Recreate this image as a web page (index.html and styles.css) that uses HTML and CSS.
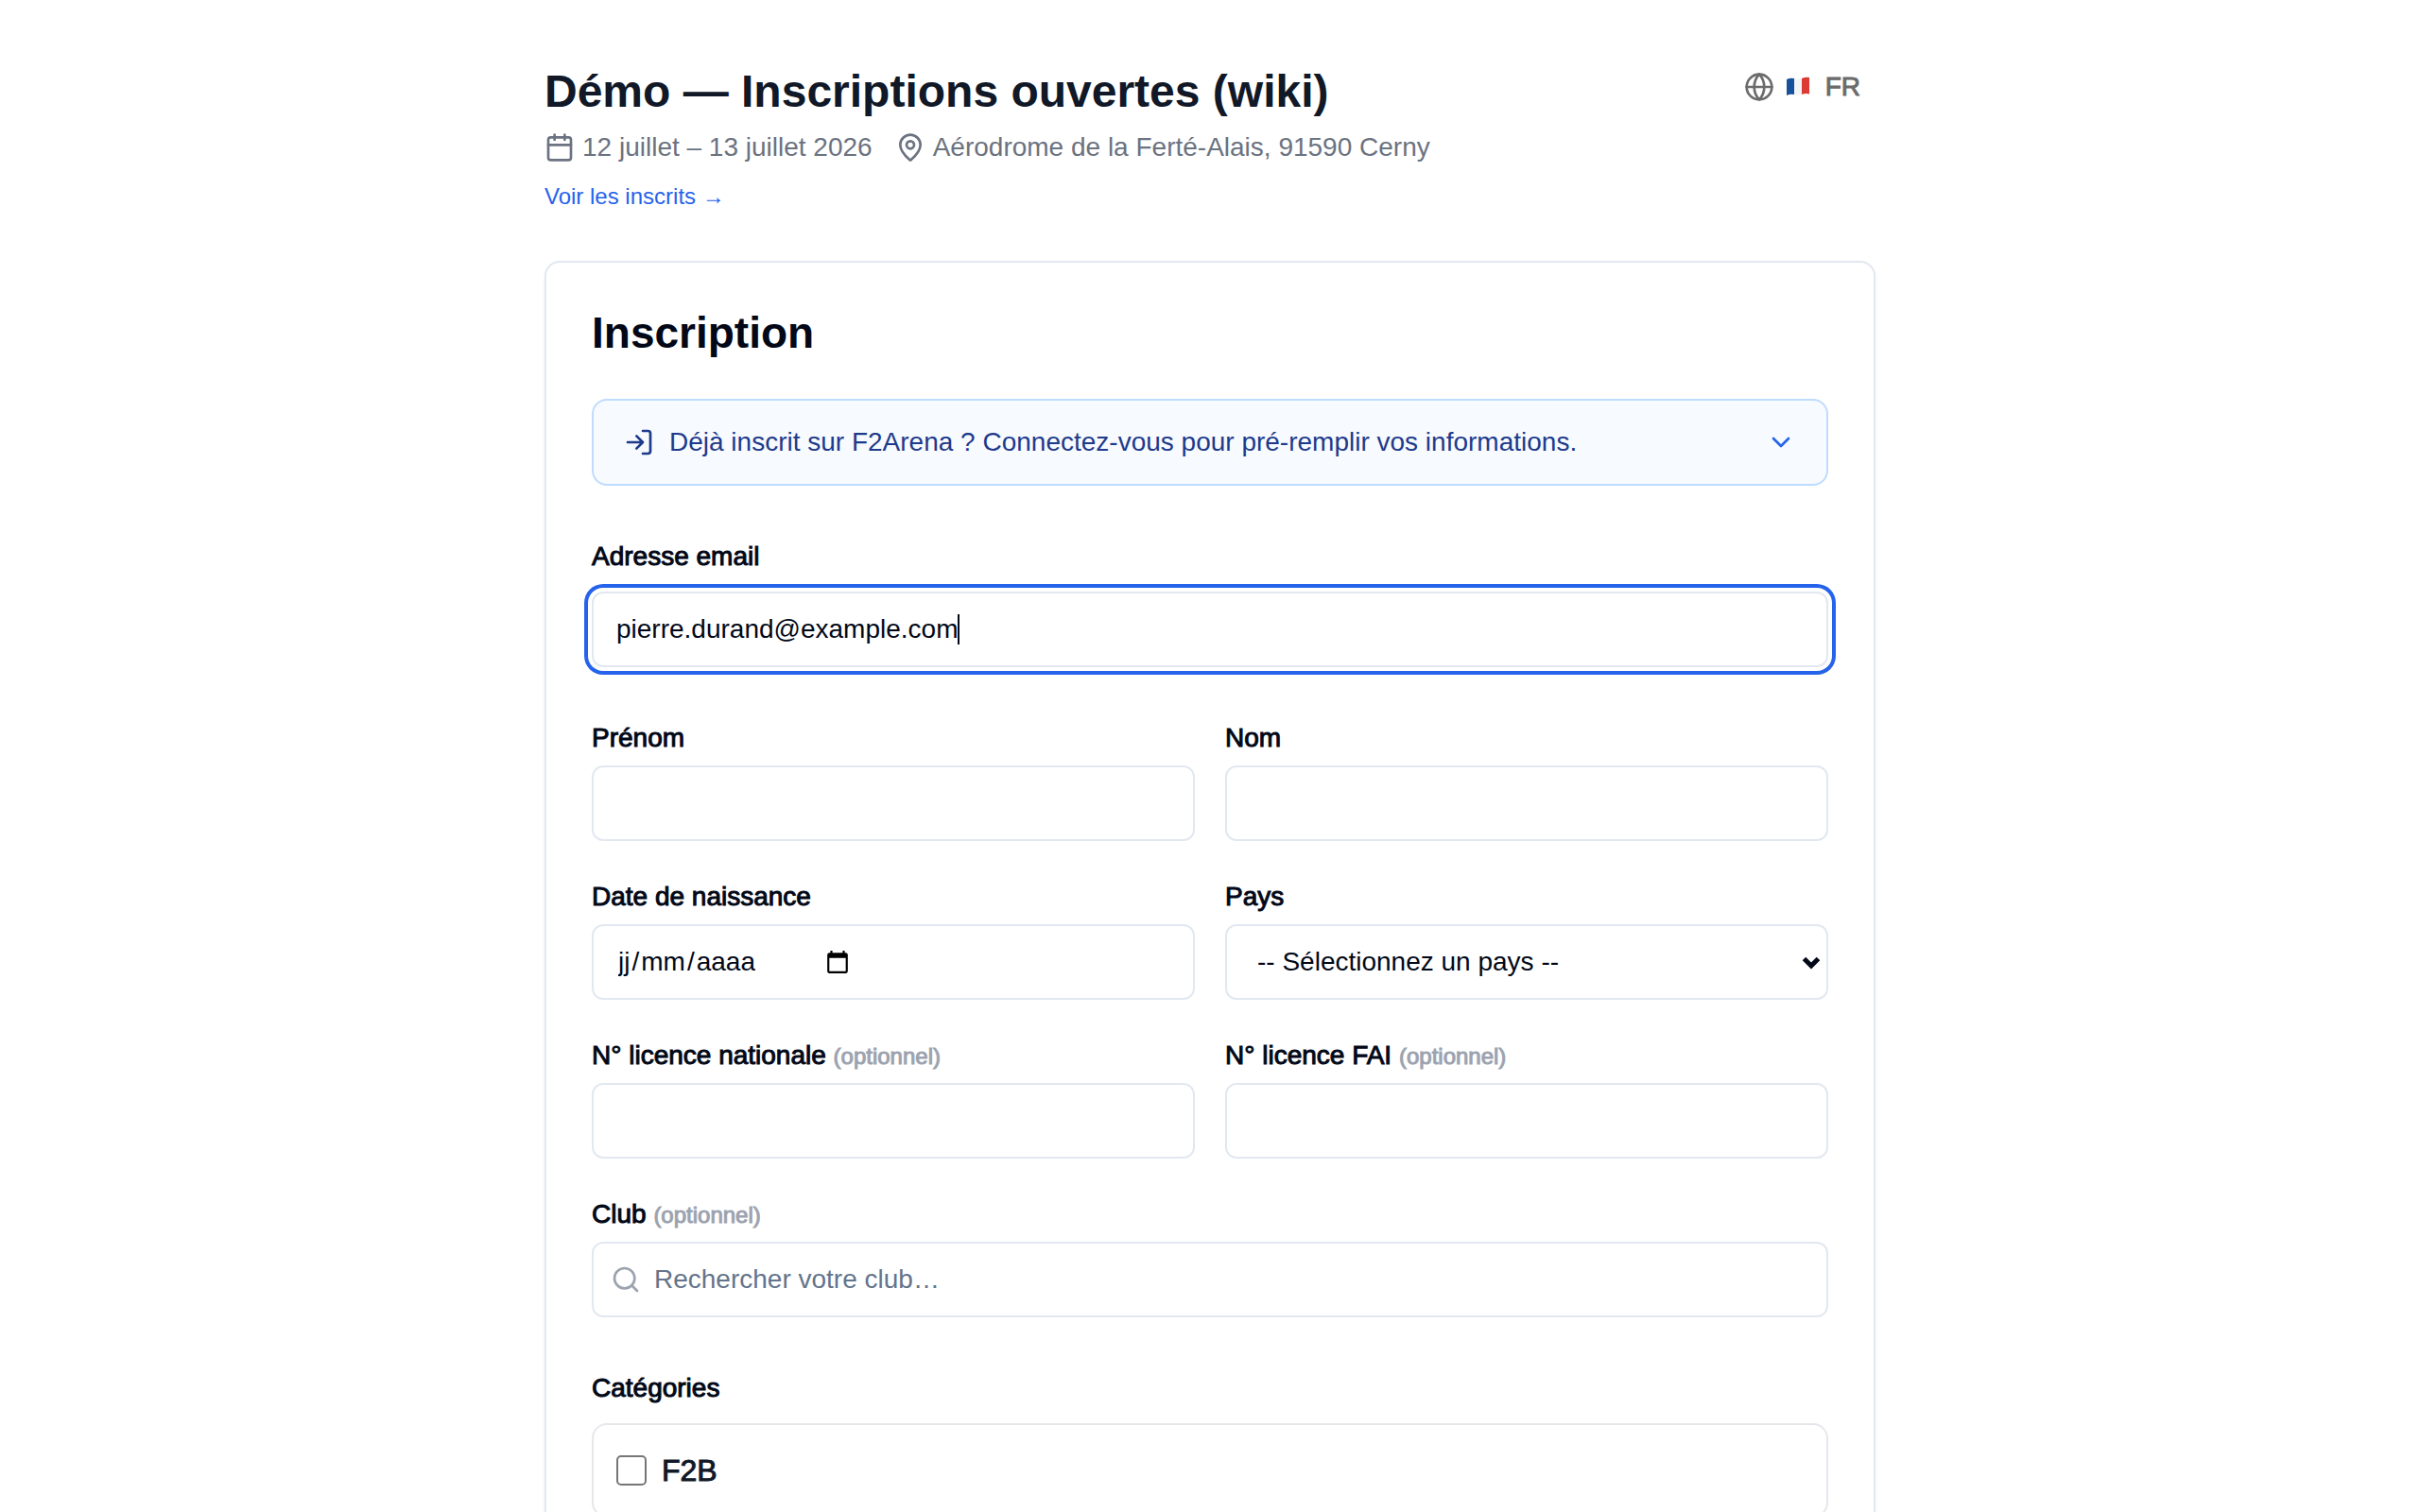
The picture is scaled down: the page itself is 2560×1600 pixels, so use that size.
FILE: index.html
```html
<!DOCTYPE html>
<html lang="fr">
<head>
    <meta charset="UTF-8">
    <meta name="viewport" content="width=device-width, initial-scale=1.0">
    <title>Démo — Inscriptions ouvertes (wiki)</title>
    <link rel="stylesheet" href="styles.css">
</head>
<body>
    <main class="page">
        <header class="header">
            <div>
                <h1>Démo — Inscriptions ouvertes (wiki)</h1>
                <div class="meta">
                    <span class="meta-item">
                        <svg class="icon" viewBox="0 0 24 24"><path d="M8 2v4M16 2v4M3 10h18"/><rect x="3" y="4" width="18" height="18" rx="2"/></svg>
                        12 juillet – 13 juillet 2026
                    </span>
                    <span class="meta-item">
                        <svg class="icon" viewBox="0 0 24 24"><path d="M20 10c0 4.993-5.539 10.193-7.399 11.799a1 1 0 0 1-1.202 0C9.539 20.193 4 14.993 4 10a8 8 0 0 1 16 0"/><circle cx="12" cy="10" r="3"/></svg>
                        Aérodrome de la Ferté-Alais, 91590 Cerny
                    </span>
                </div>
                <a class="link" href="#inscrits">Voir les inscrits →</a>
            </div>
            <button type="button" class="btn-lang">
                <svg class="icon" viewBox="0 0 24 24"><circle cx="12" cy="12" r="10"/><path d="M12 2a14.5 14.5 0 0 0 0 20 14.5 14.5 0 0 0 0-20M2 12h20"/></svg>
                <svg class="flag" viewBox="0 0 30 24">
                    <path fill="#17509b" d="M1 4Q5 2 9 3V20Q5 19 1 21Z"/>
                    <path fill="#f3f4f6" d="M9 3Q13 4 17 3V20Q13 21.500 9 20Z"/>
                    <path fill="#dc3a34" d="M17 3Q21 1 25 2V19.500Q21 18.500 17 20Z"/>
                </svg>
                <span class="medium">FR</span>
            </button>
        </header>

        <form class="card">
            <h2>Inscription</h2>

            <div class="sections">
                <button type="button" class="login-banner">
                    <svg class="icon" viewBox="0 0 24 24"><path d="M15 3h4a2 2 0 0 1 2 2v14a2 2 0 0 1-2 2h-4M10 17l5-5-5-5M15 12H3"/></svg>
                    <span class="login-text">Déjà inscrit sur F2Arena ? Connectez-vous pour pré-remplir vos informations.</span>
                    <svg class="icon chevron" viewBox="0 0 24 24"><path d="m6 9 6 6 6-6"/></svg>
                </button>

                <div class="field field-wide">
                    <label for="email">Adresse email</label>
                    <div class="control focused">
                        <input class="bare" type="email" id="email" value="pierre.durand@example.com">
                        <span class="caret"></span>
                    </div>
                </div>

                <div class="grid">
                    <div class="field">
                        <label for="prenom">Prénom</label>
                        <input class="control" type="text" id="prenom">
                    </div>
                    <div class="field">
                        <label for="nom">Nom</label>
                        <input class="control" type="text" id="nom">
                    </div>
                    <div class="field">
                        <label for="jour">Date de naissance</label>
                        <div class="control date">
                            <input class="bare" type="text" id="jour" placeholder="jj" aria-label="Jour">/<input class="bare" type="text" placeholder="mm" aria-label="Mois">/<input class="bare" type="text" placeholder="aaaa" aria-label="Année">
                            <button type="button" class="btn-date" aria-label="Calendrier">
                                <svg viewBox="0 0 24 24"><path d="M20 3h-1V1h-2v2H7V1H5v2H4c-1.100 0-2 .9-2 2v16c0 1.100.9 2 2 2h16c1.100 0 2-.9 2-2V5c0-1.100-.9-2-2-2zm0 18H4V8h16v13z"/></svg>
                            </button>
                        </div>
                    </div>
                    <div class="field">
                        <label for="pays">Pays</label>
                        <div class="select-wrap">
                            <select class="control" id="pays">
                                <option>-- Sélectionnez un pays --</option>
                                <option>France</option>
                            </select>
                            <svg class="select-arrow" viewBox="0 0 20 14"><path d="M2.500 2.500 10 10l7.500-7.500"/></svg>
                        </div>
                    </div>
                    <div class="field">
                        <label for="licence">N° licence nationale <span class="optional">(optionnel)</span></label>
                        <input class="control" type="text" id="licence">
                    </div>
                    <div class="field">
                        <label for="fai">N° licence FAI <span class="optional">(optionnel)</span></label>
                        <input class="control" type="text" id="fai">
                    </div>
                    <div class="field full">
                        <label for="club">Club <span class="optional">(optionnel)</span></label>
                        <div class="control search">
                            <svg class="icon" viewBox="0 0 24 24"><circle cx="11" cy="11" r="8"/><path d="m21 21-4.300-4.300"/></svg>
                            <input class="bare" type="text" id="club" placeholder="Rechercher votre club…">
                        </div>
                    </div>
                </div>

                <fieldset class="categories">
                    <legend>Catégories</legend>
                    <label class="category">
                        <input type="checkbox">
                        F2B
                    </label>
                </fieldset>
            </div>
        </form>
    </main>
</body>
</html>
```
FILE: styles.css
```css
* {
    box-sizing: border-box;
}
body {
    font-family: "Liberation Sans", Arial, sans-serif;
    font-size: 28px;
    line-height: 40px;
    color: #020817;
    background-color: white;
    height: 100vh;
    margin: 0;
    overflow: hidden;
}
button, input, select {
    font: inherit;
    color: inherit;
}
button {
    background: none;
    border: none;
    padding: 0;
    cursor: pointer;
}
h1, h2 {
    margin: 0;
    font-weight: bold;
}
.page {
    max-width: 1472px;
    margin: 0 auto;
    padding: 64px 32px;
}
.icon {
    width: 32px;
    height: 32px;
    flex-shrink: 0;
    fill: none;
    stroke: currentColor;
    stroke-width: 2;
    stroke-linecap: round;
    stroke-linejoin: round;
}

/* header */
.header {
    display: flex;
    justify-content: space-between;
    align-items: flex-start;
    margin-bottom: 52px;
}
h1 {
    font-size: 48px;
    line-height: 66px;
    color: #111827;
}
.meta {
    display: flex;
    gap: 24px;
    margin: 6px 0 16px;
    color: #6b7280;
}
.meta-item {
    display: flex;
    align-items: center;
    gap: 8px;
}
.link {
    display: block;
    font-size: 24px;
    line-height: 32px;
    color: #2563eb;
    text-decoration: none;
}
.link:hover {
    text-decoration: underline;
}
.btn-lang {
    display: flex;
    align-items: center;
    gap: 12px;
    height: 56px;
    padding: 0 16px;
    color: #6b6b6b;
}
.flag {
    width: 30px;
    height: 24px;
}

/* Liberation Sans has no medium weight, thicken the regular one */
.medium, label, legend {
    -webkit-text-stroke: 1px currentColor;
}

/* card */
.card {
    padding: 48px;
    border: 2px solid #e2e8f0;
    border-radius: 16px;
    box-shadow: 0 2px 4px rgba(0, 0, 0, 0.05);
}
h2 {
    font-size: 46px;
    line-height: 52px;
    margin-bottom: 44px;
}
.sections {
    display: flex;
    flex-direction: column;
    gap: 60px;
}
.login-banner {
    display: flex;
    align-items: center;
    gap: 16px;
    height: 92px;
    padding: 0 32px;
    border: 2px solid #bfdbfe;
    border-radius: 16px;
    background-color: #f7faff;
    color: #1e3a8a;
    text-align: left;
}
.login-text {
    flex: 1;
}
.chevron {
    color: #2563eb;
}

/* fields */
.grid {
    display: grid;
    grid-template-columns: 1fr 1fr;
    gap: 44px 32px;
}
.full {
    grid-column: 1 / -1;
}
.field {
    display: flex;
    flex-direction: column;
    gap: 14px;
}
.field-wide {
    gap: 22px;
}
label, legend {
    line-height: 30px;
}
.optional {
    font-size: 24px;
    line-height: 24px;
    color: #9ca3af;
}
.control {
    display: flex;
    align-items: center;
    width: 100%;
    height: 80px;
    padding: 0 24px;
    border: 2px solid #e2e8f0;
    border-radius: 12px;
    background-color: white;
    outline: none;
}
.focused {
    box-shadow: 0 0 0 4px white, 0 0 0 8px #2563eb;
}
.bare {
    padding: 0;
    border: none;
    outline: none;
    background: none;
    field-sizing: content;
}
.caret {
    width: 2px;
    height: 32px;
    background-color: #020817;
}
.date .bare {
    padding: 0 2px;
}
.date .bare::placeholder {
    color: #020817;
}
.btn-date {
    display: flex;
    margin-left: 72px;
}
.btn-date svg {
    width: 26px;
    height: 26px;
}
.select-wrap {
    position: relative;
}
select.control {
    appearance: none;
    padding: 0 32px;
}
.select-arrow {
    position: absolute;
    top: 34px;
    right: 8px;
    width: 20px;
    height: 14px;
    fill: none;
    stroke: #020817;
    stroke-width: 5;
    pointer-events: none;
}
.search {
    gap: 14px;
    padding: 0 18px;
}
.search .icon {
    color: #9ca3af;
}
.search .bare {
    flex: 1;
}
.search .bare::placeholder {
    color: #64748b;
}

/* categories */
.categories {
    margin: 0;
    padding: 0;
    border: none;
}
legend {
    padding: 0;
    margin-bottom: 22px;
}
.category {
    display: flex;
    align-items: center;
    gap: 16px;
    height: 100px;
    padding: 0 24px;
    border: 2px solid #e5e7eb;
    border-radius: 16px;
    font-size: 32px;
    color: #111827;
}
.category input {
    appearance: none;
    width: 32px;
    height: 32px;
    margin: 0;
    border: 2px solid #767676;
    border-radius: 5px;
    background-color: white;
}
```
